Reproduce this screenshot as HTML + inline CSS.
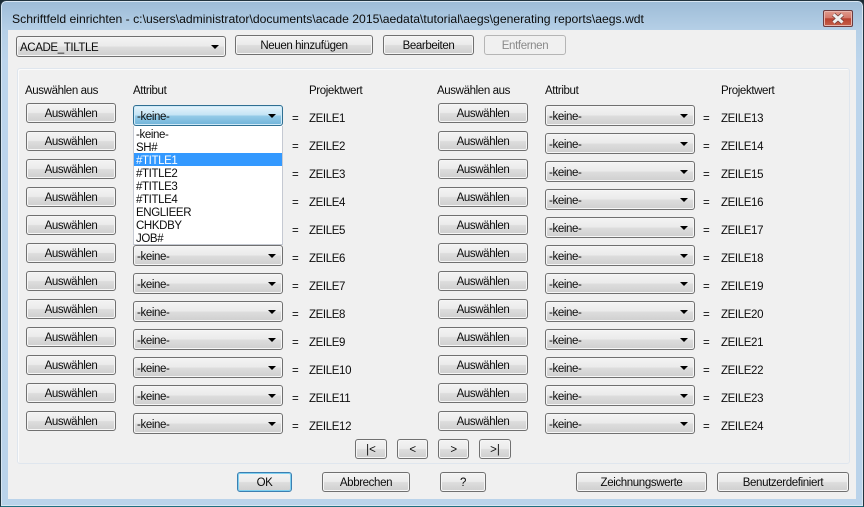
<!DOCTYPE html>
<html><head><meta charset="utf-8"><style>
html,body{margin:0;padding:0;width:864px;height:507px;overflow:hidden;background:#1a2a33}
*{box-sizing:border-box}
body{font:11.5px/16px "Liberation Sans",sans-serif;letter-spacing:-.38px;color:#0c0c0c;position:relative}
#w{position:absolute;left:0;top:0;width:864px;height:507px;border:1px solid #22343f;border-bottom-color:#1f6f80;border-radius:6px 6px 0 0;background:linear-gradient(#9dbcd7 0,#b6d0e7 30px,#bcd5ec 60px,#bad3ea 100%);box-shadow:inset 0 0 0 1px #d8e6f2}
#c{position:absolute;left:8px;top:30px;width:848px;height:469px;background:#f0f0f0}
#p{position:absolute;left:17px;top:68px;width:833px;height:396px;background:#f0f0f0;border:1px solid #dfe6ee;border-radius:3px;box-shadow:inset 1px 1px 0 #fbfbfb}
.a{position:absolute;white-space:nowrap}
.b{position:absolute;height:20px;border:1px solid #707070;border-radius:3px;text-align:center;line-height:21px;white-space:nowrap;background:linear-gradient(#f3f3f3 0,#ebebeb 48%,#dddddd 52%,#cfcfcf 100%);box-shadow:inset 0 0 0 1px #f6f6f6}
.s{position:absolute;width:150px;height:21px;border:1px solid #707070;border-radius:3px;padding-left:3px;line-height:22px;background:linear-gradient(#f3f3f3 0,#ebebeb 48%,#dddddd 52%,#cfcfcf 100%);box-shadow:inset 0 0 0 1px #f6f6f6}
.s:after{content:"";position:absolute;right:6px;top:8px;border:4px solid transparent;border-top:4px solid #000;border-bottom:0}
.f{border-color:#2f6f92;background:linear-gradient(#e6f4fb 0,#c4e4f5 48%,#95cbe8 52%,#6fb3d9 100%);box-shadow:inset 0 0 0 1px #cfeaf8}
#dd{position:absolute;left:133px;top:126px;width:150px;height:119px;background:#fff;border:1px solid #c5c9d2;border-top:0;padding-top:1px;line-height:16px}
#dd div{height:13px;padding-left:2px}
#dd .h{background:#3399ff;color:#fff}
#x{position:absolute;left:823px;top:10px;width:30px;height:17px;border:1px solid #6b3b3f;border-radius:2px;background:linear-gradient(#e09a8c 0,#d5796b 45%,#b8412f 52%,#c6604a 100%);box-shadow:inset 0 0 0 1px #e8b5ad}
</style></head><body>
<div id="w"></div>
<div class="a" style="left:12px;top:12px;font-size:12.18px;line-height:14px;letter-spacing:0;color:#0c0c0c">Schriftfeld einrichten - c:\users\administrator\documents\acade 2015\aedata\tutorial\aegs\generating reports\aegs.wdt</div>
<div id="x"><svg width="28" height="15" style="position:absolute;left:0;top:0"><path d="M9.5 3.5L18.5 11.5M18.5 3.5L9.5 11.5" stroke="#6d3a35" stroke-width="4.5" fill="none"/><path d="M9.5 3.5L18.5 11.5M18.5 3.5L9.5 11.5" stroke="#eeeeee" stroke-width="3" fill="none"/></svg></div>
<div id="c"></div>
<div id="p"></div>

<div class="s" style="left:16px;top:36px;width:210px;">ACADE_TILTLE</div>
<div class="b" style="left:235px;top:35px;width:138px">Neuen hinzufügen</div>
<div class="b" style="left:383px;top:35px;width:91px">Bearbeiten</div>
<div class="b" style="left:484px;top:35px;width:82px;color:#8a8a8a;border-color:#b5b5b5;background:#f0f0f0;box-shadow:none">Entfernen</div>

<div class="a" style="left:25px;top:83px">Auswählen aus</div>
<div class="a" style="left:133px;top:83px">Attribut</div>
<div class="a" style="left:309px;top:83px">Projektwert</div>
<div class="a" style="left:437px;top:83px">Auswählen aus</div>
<div class="a" style="left:545px;top:83px">Attribut</div>
<div class="a" style="left:721px;top:83px">Projektwert</div>

<div class="b" style="left:26px;top:103px;width:90px">Auswählen</div>
<div class="b" style="left:26px;top:131px;width:90px">Auswählen</div>
<div class="b" style="left:26px;top:159px;width:90px">Auswählen</div>
<div class="b" style="left:26px;top:187px;width:90px">Auswählen</div>
<div class="b" style="left:26px;top:215px;width:90px">Auswählen</div>
<div class="b" style="left:26px;top:243px;width:90px">Auswählen</div>
<div class="b" style="left:26px;top:271px;width:90px">Auswählen</div>
<div class="b" style="left:26px;top:299px;width:90px">Auswählen</div>
<div class="b" style="left:26px;top:327px;width:90px">Auswählen</div>
<div class="b" style="left:26px;top:355px;width:90px">Auswählen</div>
<div class="b" style="left:26px;top:383px;width:90px">Auswählen</div>
<div class="b" style="left:26px;top:411px;width:90px">Auswählen</div>

<div class="b" style="left:438px;top:103px;width:90px">Auswählen</div>
<div class="b" style="left:438px;top:131px;width:90px">Auswählen</div>
<div class="b" style="left:438px;top:159px;width:90px">Auswählen</div>
<div class="b" style="left:438px;top:187px;width:90px">Auswählen</div>
<div class="b" style="left:438px;top:215px;width:90px">Auswählen</div>
<div class="b" style="left:438px;top:243px;width:90px">Auswählen</div>
<div class="b" style="left:438px;top:271px;width:90px">Auswählen</div>
<div class="b" style="left:438px;top:299px;width:90px">Auswählen</div>
<div class="b" style="left:438px;top:327px;width:90px">Auswählen</div>
<div class="b" style="left:438px;top:355px;width:90px">Auswählen</div>
<div class="b" style="left:438px;top:383px;width:90px">Auswählen</div>
<div class="b" style="left:438px;top:411px;width:90px">Auswählen</div>

<div class="s f" style="left:133px;top:105px">-keine-</div>
<div class="s" style="left:133px;top:245px">-keine-</div>
<div class="s" style="left:133px;top:273px">-keine-</div>
<div class="s" style="left:133px;top:301px">-keine-</div>
<div class="s" style="left:133px;top:329px">-keine-</div>
<div class="s" style="left:133px;top:357px">-keine-</div>
<div class="s" style="left:133px;top:385px">-keine-</div>
<div class="s" style="left:133px;top:413px">-keine-</div>

<div class="s" style="left:545px;top:105px">-keine-</div>
<div class="s" style="left:545px;top:133px">-keine-</div>
<div class="s" style="left:545px;top:161px">-keine-</div>
<div class="s" style="left:545px;top:189px">-keine-</div>
<div class="s" style="left:545px;top:217px">-keine-</div>
<div class="s" style="left:545px;top:245px">-keine-</div>
<div class="s" style="left:545px;top:273px">-keine-</div>
<div class="s" style="left:545px;top:301px">-keine-</div>
<div class="s" style="left:545px;top:329px">-keine-</div>
<div class="s" style="left:545px;top:357px">-keine-</div>
<div class="s" style="left:545px;top:385px">-keine-</div>
<div class="s" style="left:545px;top:413px">-keine-</div>

<div id="dd"><div>-keine-</div><div>SH#</div><div class="h">#TITLE1</div><div>#TITLE2</div><div>#TITLE3</div><div>#TITLE4</div><div>ENGLIEER</div><div>CHKDBY</div><div>JOB#</div></div>

<div class="a" style="left:292px;top:111px">=</div><div class="a" style="left:309px;top:111px">ZEILE1</div>
<div class="a" style="left:292px;top:139px">=</div><div class="a" style="left:309px;top:139px">ZEILE2</div>
<div class="a" style="left:292px;top:167px">=</div><div class="a" style="left:309px;top:167px">ZEILE3</div>
<div class="a" style="left:292px;top:195px">=</div><div class="a" style="left:309px;top:195px">ZEILE4</div>
<div class="a" style="left:292px;top:223px">=</div><div class="a" style="left:309px;top:223px">ZEILE5</div>
<div class="a" style="left:292px;top:251px">=</div><div class="a" style="left:309px;top:251px">ZEILE6</div>
<div class="a" style="left:292px;top:279px">=</div><div class="a" style="left:309px;top:279px">ZEILE7</div>
<div class="a" style="left:292px;top:307px">=</div><div class="a" style="left:309px;top:307px">ZEILE8</div>
<div class="a" style="left:292px;top:335px">=</div><div class="a" style="left:309px;top:335px">ZEILE9</div>
<div class="a" style="left:292px;top:363px">=</div><div class="a" style="left:309px;top:363px">ZEILE10</div>
<div class="a" style="left:292px;top:391px">=</div><div class="a" style="left:309px;top:391px">ZEILE11</div>
<div class="a" style="left:292px;top:419px">=</div><div class="a" style="left:309px;top:419px">ZEILE12</div>

<div class="a" style="left:703px;top:111px">=</div><div class="a" style="left:721px;top:111px">ZEILE13</div>
<div class="a" style="left:703px;top:139px">=</div><div class="a" style="left:721px;top:139px">ZEILE14</div>
<div class="a" style="left:703px;top:167px">=</div><div class="a" style="left:721px;top:167px">ZEILE15</div>
<div class="a" style="left:703px;top:195px">=</div><div class="a" style="left:721px;top:195px">ZEILE16</div>
<div class="a" style="left:703px;top:223px">=</div><div class="a" style="left:721px;top:223px">ZEILE17</div>
<div class="a" style="left:703px;top:251px">=</div><div class="a" style="left:721px;top:251px">ZEILE18</div>
<div class="a" style="left:703px;top:279px">=</div><div class="a" style="left:721px;top:279px">ZEILE19</div>
<div class="a" style="left:703px;top:307px">=</div><div class="a" style="left:721px;top:307px">ZEILE20</div>
<div class="a" style="left:703px;top:335px">=</div><div class="a" style="left:721px;top:335px">ZEILE21</div>
<div class="a" style="left:703px;top:363px">=</div><div class="a" style="left:721px;top:363px">ZEILE22</div>
<div class="a" style="left:703px;top:391px">=</div><div class="a" style="left:721px;top:391px">ZEILE23</div>
<div class="a" style="left:703px;top:419px">=</div><div class="a" style="left:721px;top:419px">ZEILE24</div>

<div class="b" style="left:355px;top:439px;width:32px;letter-spacing:0">|&lt;</div>
<div class="b" style="left:397px;top:439px;width:31px">&lt;</div>
<div class="b" style="left:438px;top:439px;width:31px">&gt;</div>
<div class="b" style="left:479px;top:439px;width:32px;letter-spacing:0">&gt;|</div>

<div class="b" style="left:237px;top:472px;width:55px;border-color:#3c7fb1;box-shadow:inset 0 0 0 1px #7fd0f0">OK</div>
<div class="b" style="left:322px;top:472px;width:88px">Abbrechen</div>
<div class="b" style="left:440px;top:472px;width:46px">?</div>
<div class="b" style="left:576px;top:472px;width:131px">Zeichnungswerte</div>
<div class="b" style="left:717px;top:472px;width:132px">Benutzerdefiniert</div>
</body></html>
